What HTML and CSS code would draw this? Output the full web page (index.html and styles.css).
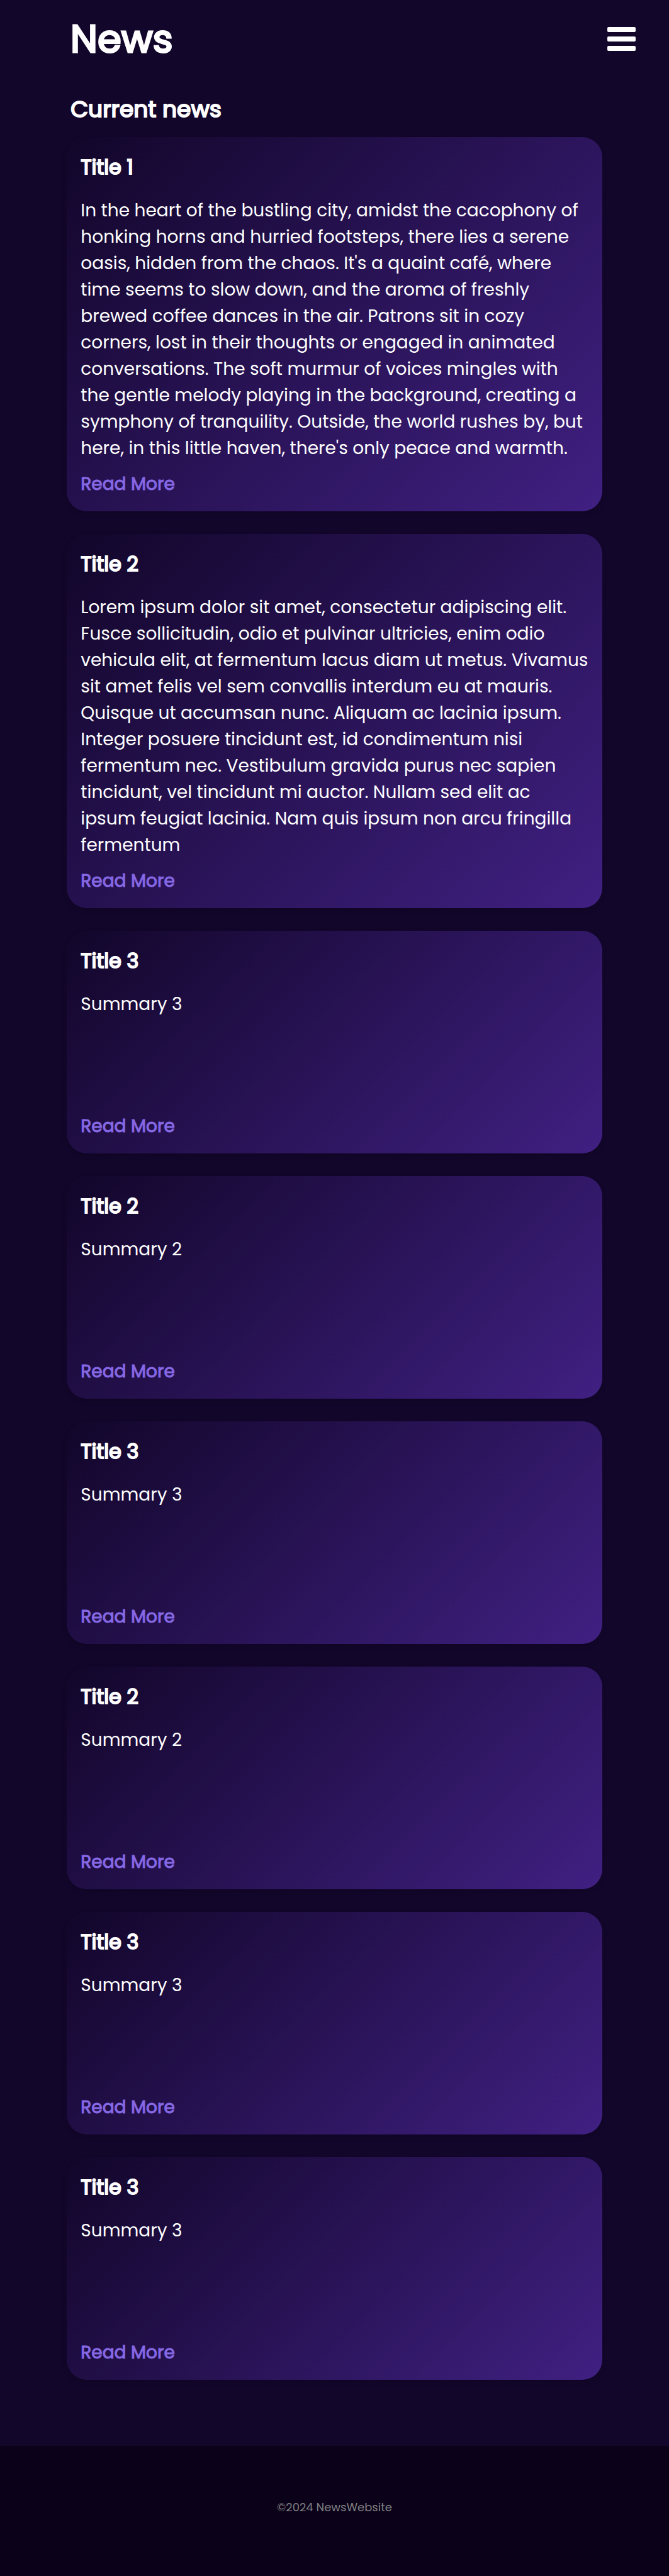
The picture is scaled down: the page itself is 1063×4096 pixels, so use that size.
FILE: index.html
```html
<!DOCTYPE html>
<html lang="en">
<head>
<meta charset="utf-8">
<meta name="viewport" content="width=device-width, initial-scale=1">
<title>News</title>
<link rel="stylesheet" href="styles.css">
</head>
<body>
<header class="site-header">
  <h1 class="site-title">News</h1>
  <button class="menu-button" type="button" aria-label="Open menu">
    <svg class="menu-icon" viewBox="0 0 45 38" aria-hidden="true">
      <rect width="45" height="8" rx="2"/>
      <rect y="15" width="45" height="8" rx="2"/>
      <rect y="30" width="45" height="8" rx="2"/>
    </svg>
  </button>
</header>
<main class="news">
  <h2 class="section-title">Current news</h2>
  <div class="news-list">
    <article class="card">
      <h3 class="card-title">Title 1</h3>
      <p class="card-summary">In the heart of the bustling city, amidst the cacophony of honking horns and hurried footsteps, there lies a serene oasis, hidden from the chaos. It's a quaint café, where time seems to slow down, and the aroma of freshly brewed coffee dances in the air. Patrons sit in cozy corners, lost in their thoughts or engaged in animated conversations. The soft murmur of voices mingles with the gentle melody playing in the background, creating a symphony of tranquility. Outside, the world rushes by, but here, in this little haven, there's only peace and warmth.</p>
      <a class="card-link" href="#">Read More</a>
    </article>
    <article class="card">
      <h3 class="card-title">Title 2</h3>
      <p class="card-summary">Lorem ipsum dolor sit amet, consectetur adipiscing elit. Fusce sollicitudin, odio et pulvinar ultricies, enim odio vehicula elit, at fermentum lacus diam ut metus. Vivamus sit amet felis vel sem convallis interdum eu at mauris. Quisque ut accumsan nunc. Aliquam ac lacinia ipsum. Integer posuere tincidunt est, id condimentum nisi fermentum nec. Vestibulum gravida purus nec sapien tincidunt, vel tincidunt mi auctor. Nullam sed elit ac ipsum feugiat lacinia. Nam quis ipsum non arcu fringilla fermentum</p>
      <a class="card-link" href="#">Read More</a>
    </article>
    <article class="card">
      <h3 class="card-title">Title 3</h3>
      <p class="card-summary">Summary 3</p>
      <a class="card-link" href="#">Read More</a>
    </article>
    <article class="card">
      <h3 class="card-title">Title 2</h3>
      <p class="card-summary">Summary 2</p>
      <a class="card-link" href="#">Read More</a>
    </article>
    <article class="card">
      <h3 class="card-title">Title 3</h3>
      <p class="card-summary">Summary 3</p>
      <a class="card-link" href="#">Read More</a>
    </article>
    <article class="card">
      <h3 class="card-title">Title 2</h3>
      <p class="card-summary">Summary 2</p>
      <a class="card-link" href="#">Read More</a>
    </article>
    <article class="card">
      <h3 class="card-title">Title 3</h3>
      <p class="card-summary">Summary 3</p>
      <a class="card-link" href="#">Read More</a>
    </article>
    <article class="card">
      <h3 class="card-title">Title 3</h3>
      <p class="card-summary">Summary 3</p>
      <a class="card-link" href="#">Read More</a>
    </article>
  </div>
</main>
<footer class="site-footer">
  <p class="copyright">©2024 NewsWebsite</p>
</footer>
</body>
</html>
```
FILE: styles.css
```css
* {
  box-sizing: border-box;
}

body {
  margin: 0;
  background: #12062a;
  color: #fff;
  font-family: Poppins, Inter, sans-serif;
  font-size: 28px;
  line-height: 42px;
}

h1,
h2,
h3,
p {
  margin: 0;
}

/* Headings and links thicken the regular weight with an outline */
.site-title,
.section-title,
.card-title,
.card-link {
  font-weight: 400;
  -webkit-text-stroke: 2px currentColor;
}

.site-header {
  display: flex;
  align-items: center;
  justify-content: space-between;
  padding: 14px 5% 14px 112px;
}

.site-title {
  font-size: 61px;
  line-height: 96px;
  -webkit-text-stroke-width: 3px;
}

.menu-button {
  display: flex;
  padding: 0;
  border: 0;
  background: none;
  color: inherit;
  cursor: pointer;
}

.menu-icon {
  width: 45px;
  height: 38px;
  fill: currentColor;
}

.news {
  padding: 23px 10% 105px;
}

.section-title {
  padding-left: 6px;
  font-size: 36px;
  line-height: 54px;
}

.news-list {
  display: grid;
  gap: 36px;
  margin-top: 17px;
}

.card {
  display: flex;
  flex-direction: column;
  min-height: 354px;
  padding: 24px 20px 22px 22px;
  border-radius: 32px;
  background: linear-gradient(135deg, #12062a, #402082);
  box-shadow: 0 4px 8px rgba(0, 0, 0, 0.1);
}

.card-title {
  font-size: 32px;
  line-height: 48px;
}

.card-summary {
  margin: 24px 0 15px;
}

.card-link {
  align-self: flex-start;
  margin-top: auto;
  color: #8668e4;
  text-decoration: none;
  -webkit-text-stroke-width: 1px;
}

.site-footer {
  padding: 86px 0 97px;
  background: #0b021a;
  color: #808080;
  text-align: center;
}

.copyright {
  font-size: 18px;
  line-height: 24px;
}
```
